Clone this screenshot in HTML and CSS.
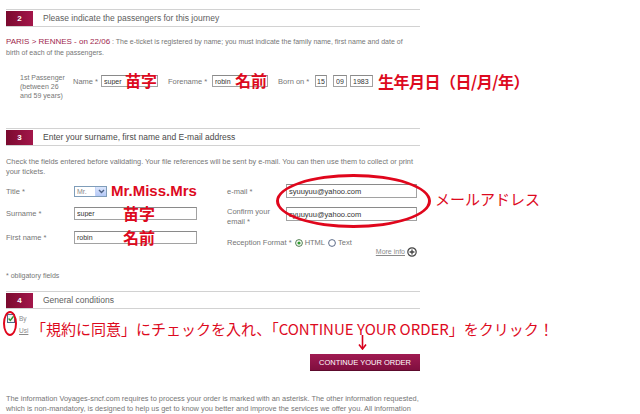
FILE: index.html
```
<!DOCTYPE html>
<html>
<head>
  <meta charset="utf-8">
  <title>Passengers - Voyages-sncf</title>
  <link rel="stylesheet" href="styles.css">
</head>
<body>
  <div class="page">

    <!-- step 2 : passengers -->
    <div class="step-head">
      <span class="step-num">2</span>
      <span class="step-title">Please indicate the passengers for this journey</span>
    </div>
    <p class="intro">
      <span class="route">PARIS &gt; RENNES - on 22/06</span>&nbsp;: The e-ticket is registered by name; you must indicate the family name, first name and date of birth of each of the passengers.
    </p>

    <div class="pax-row">
      <div class="pax-label">1st Passenger<br>(between 26<br>and 59 years)</div>
      <div class="pax-fields">
        <span class="lbl lbl-name">Name *</span>
        <span class="field">
          <input type="text" class="inp inp-name" value="super">
          <span class="note note-in">苗字</span>
        </span>
        <span class="lbl lbl-fore">Forename *</span>
        <span class="field">
          <input type="text" class="inp inp-fore" value="robin">
          <span class="note note-in">名前</span>
        </span>
        <span class="lbl lbl-born">Born on *</span>
        <input type="text" class="inp inp-day" value="15">
        <input type="text" class="inp inp-month" value="09">
        <input type="text" class="inp inp-year" value="1983">
        <span class="note note-birth">生年月日（日/月/年）</span>
      </div>
    </div>

    <!-- step 3 : contact -->
    <div class="step-head step-3">
      <span class="step-num">3</span>
      <span class="step-title dark">Enter your surname, first name and E-mail address</span>
    </div>
    <p class="check-text">Check the fields entered before validating. Your file references will be sent by e-mail. You can then use them to collect or print your tickets.</p>

    <div class="contact">
      <div class="col-left">
        <div class="frow">
          <span class="flabel">Title *</span>
          <div class="select">
            <span class="select-val">Mr.</span>
            <span class="select-btn">
              <svg width="7" height="5" viewBox="0 0 7 5"><path d="M1 1 L3.5 3.5 L6 1" fill="none" stroke="#4d6185" stroke-width="1.4"/></svg>
            </span>
          </div>
          <span class="note note-title">Mr.Miss.Mrs</span>
        </div>
        <div class="frow row-surname">
          <span class="flabel">Surname *</span>
          <span class="field">
            <input type="text" class="inp inp-long" value="super">
            <span class="note note-mid">苗字</span>
          </span>
        </div>
        <div class="frow row-first">
          <span class="flabel">First name *</span>
          <span class="field">
            <input type="text" class="inp inp-long" value="robin">
            <span class="note note-mid">名前</span>
          </span>
        </div>
      </div>

      <div class="col-right">
        <div class="frow">
          <span class="flabel flabel-r">e-mail *</span>
          <input type="text" class="inp inp-mail" value="syuuyuu@yahoo.com">
        </div>
        <div class="frow row-confirm">
          <span class="flabel flabel-r two-line">Confirm your<br>email *</span>
          <input type="text" class="inp inp-mail" value="syuuyuu@yahoo.com">
        </div>
        <div class="reception">
          Reception Format *
          <svg class="radio" width="8" height="8" viewBox="0 0 8 8"><circle cx="4" cy="4" r="3.4" fill="#fff" stroke="#3b6e3b" stroke-width="0.9"/><circle cx="4" cy="4" r="1.6" fill="#2f9a2f"/></svg>
          HTML
          <svg class="radio" width="8" height="8" viewBox="0 0 8 8"><circle cx="4" cy="4" r="3.4" fill="#fff" stroke="#4a5a7a" stroke-width="0.9"/></svg>
          Text
        </div>
        <div class="more-info">
          <a href="#">More info</a>
          <svg width="10" height="10" viewBox="0 0 10 10"><circle cx="5" cy="5" r="4.2" fill="#fff" stroke="#444" stroke-width="1.2"/><path d="M5 2.6 V7.4 M2.6 5 H7.4" stroke="#444" stroke-width="1.3"/></svg>
        </div>
        <div class="ring ring-mail"></div>
        <span class="note note-mail">メールアドレス</span>
      </div>
    </div>

    <p class="oblig">* obligatory fields</p>

    <!-- step 4 : conditions -->
    <div class="step-head">
      <span class="step-num">4</span>
      <span class="step-title">General conditions</span>
    </div>

    <div class="accept">
      <svg class="tick" width="8" height="9" viewBox="0 0 8 9"><rect x="0.5" y="0.5" width="7" height="8" fill="#f4f4f4" stroke="#4b6a8a"/><path d="M1.6 4.6 L3.3 6.4 L6.6 2.2" fill="none" stroke="#2c9a2c" stroke-width="1.4"/></svg>
      <span class="accept-text">By<br><a href="#">Usi</a></span>
      <span class="note note-accept">「規約に同意」にチェックを入れ、「CONTINUE YOUR ORDER」をクリック！</span>
      <div class="ring ring-tick"></div>
    </div>

    <div class="arrow">
      <svg width="9" height="15" viewBox="0 0 9 15"><path d="M4.5 0 V13" stroke="#d8001c" stroke-width="1.6"/><path d="M1 9.5 L4.5 14 L8 9.5" fill="none" stroke="#d8001c" stroke-width="1.6"/></svg>
    </div>

    <div class="actions">
      <button type="button" class="btn-continue">CONTINUE YOUR ORDER</button>
    </div>

    <p class="legal">The information Voyages-sncf.com requires to process your order is marked with an asterisk. The other information requested, which is non-mandatory, is designed to help us get to know you better and improve the services we offer you. All information</p>
  </div>
</body>
</html>
```

FILE: styles.css
```
body {
  margin: 0;
  background-color: #ffffff;
  font-family: "Liberation Sans", Arial, sans-serif;
  color: #767676;
  overflow: hidden;
}

p {
  margin: 0;
}

.page {
  width: 414px;
  height: 414px;
  padding: 9px 0 0 6px;
}

/* step headers */

.step-head {
  display: flex;
  align-items: center;
  height: 16px;
  border-top: 1px solid #d2d2d2;
  border-bottom: 1px solid #d2d2d2;
}

.step-num {
  align-self: stretch;
  flex: none;
  width: 27px;
  margin-top: 1px;
  background: linear-gradient(to right, #7a0a2f, #a3164a);
  color: #ffffff;
  font-size: 8px;
  font-weight: bold;
  line-height: 15px;
  text-align: center;
}

.step-title {
  margin-left: 10px;
  font-size: 8.5px;
  color: #5e5e5e;
}

.step-title.dark {
  color: #4a4a4a;
}

/* step 2 */

.intro {
  width: 406px;
  margin-top: 9px;
  font-size: 7px;
  line-height: 11px;
}

.route {
  color: #9e1f4d;
  font-size: 8px;
  line-height: 1;
}

.pax-row {
  display: flex;
  align-items: flex-start;
  margin-top: 15px;
  font-size: 7px;
}

.pax-label {
  flex: none;
  width: 53px;
  padding-left: 14px;
  line-height: 9px;
}

.pax-fields {
  display: flex;
  flex: none;
  align-items: center;
  height: 12px;
  margin-top: 2px;
  font-size: 7.5px;
}

.pax-fields > * {
  flex: none;
}

.lbl-name {
  width: 28px;
}

.lbl-fore {
  width: 44px;
  margin-left: 10px;
}

.lbl-born {
  width: 37px;
  margin-left: 10px;
}

.field {
  position: relative;
  display: inline-block;
}

.inp {
  box-sizing: border-box;
  height: 12px;
  padding: 0 2px;
  border: 1px solid #a2a2a2;
  border-top-color: #8a8a8a;
  background: #ffffff;
  font-family: "Liberation Sans", Arial, sans-serif;
  font-size: 7px;
  color: #333333;
  outline: none;
}

.inp-name {
  width: 57px;
  display: block;
}

.inp-fore {
  width: 56px;
  display: block;
}

.inp-day {
  width: 12px;
  padding: 0 1px;
}

.inp-month {
  width: 14px;
  margin-left: 6px;
  padding: 0 2px;
}

.inp-year {
  width: 23px;
  margin-left: 3px;
}

/* red hand-written annotations */

.note {
  font-family: "Noto Sans CJK JP", sans-serif;
  color: #dd0a1e;
  font-size: 16px;
  line-height: 18px;
  white-space: nowrap;
}

.note-in {
  position: absolute;
  right: 1px;
  top: -4px;
  font-weight: bold;
}

.note-birth {
  margin-left: 5px;
  font-weight: bold;
  letter-spacing: -0.5px;
}

/* step 3 */

.step-3 {
  margin-top: 28px;
}

.check-text {
  margin-top: 11px;
  font-size: 7.35px;
  line-height: 9.5px;
}

.contact {
  display: flex;
  margin-top: 8px;
  font-size: 7.5px;
}

.col-left {
  flex: none;
  width: 221px;
}

.col-right {
  position: relative;
  flex: 1;
}

.frow {
  display: flex;
  align-items: center;
  height: 14px;
}

.frow > * {
  flex: none;
}

.flabel {
  width: 68px;
}

.flabel-r {
  width: 59px;
}

.row-surname {
  margin-top: 8px;
}

.row-first {
  margin-top: 10px;
}

.select {
  display: flex;
  align-items: center;
  box-sizing: border-box;
  width: 33px;
  height: 11px;
  border: 1px solid #7f9db9;
  background: #ffffff;
}

.select-val {
  flex: 1;
  padding-left: 2px;
  font-size: 7px;
  color: #8a8a8a;
}

.select-btn {
  display: flex;
  align-items: center;
  justify-content: center;
  width: 10px;
  height: 9px;
  background: linear-gradient(#dbe6fd, #b4c8f6);
  border-left: 1px solid #c3d3f8;
}

.note-title {
  margin-left: 4px;
  font-family: "Liberation Sans", Arial, sans-serif;
  font-weight: bold;
  font-size: 15px;
}

.inp-long {
  display: block;
  width: 123px;
  height: 13px;
}

.note-mid {
  position: absolute;
  left: 49px;
  top: -3px;
  font-weight: bold;
}

.inp-mail {
  width: 131px;
  height: 14px;
  font-size: 7.5px;
}

.row-confirm {
  align-items: flex-start;
  height: 20px;
  margin-top: 9px;
}

.two-line {
  line-height: 10px;
}

.reception {
  display: flex;
  align-items: center;
  margin-top: 12px;
  line-height: 8px;
}

.radio {
  flex: none;
  margin: 0 2px 0 3px;
}

.more-info {
  display: flex;
  align-items: center;
  justify-content: flex-end;
  gap: 2px;
  height: 9px;
  padding-right: 3px;
  font-size: 7px;
}

.more-info a {
  color: #8a8a8a;
}

.ring {
  position: absolute;
  border: 3px solid #e0061c;
  border-radius: 50%;
  box-sizing: border-box;
}

.ring-mail {
  left: 49px;
  top: -10px;
  width: 155px;
  height: 54px;
}

.note-mail {
  position: absolute;
  left: 208px;
  top: 6px;
  font-size: 15px;
}

.oblig {
  margin-top: 15px;
  font-size: 7px;
  line-height: 9px;
}

/* step 4 */

.oblig + .step-head {
  margin-top: 11px;
}

.accept {
  position: relative;
  display: flex;
  align-items: flex-start;
  margin-top: 4px;
}

.accept > * {
  flex: none;
}

.tick {
  margin: 1px 0 0 1px;
}

.accept-text {
  width: 12px;
  margin-left: 4px;
  font-size: 6.5px;
  line-height: 12px;
  color: #8a8a8a;
}

.accept-text a {
  color: #8a8a8a;
}

.note-accept {
  margin-top: 7px;
  font-size: 15px;
}

.ring-tick {
  left: -3px;
  top: -2px;
  width: 14px;
  height: 25px;
  border-width: 2.5px;
}

.arrow {
  height: 15px;
  margin-top: -3px;
  padding-left: 352px;
}

.actions {
  display: flex;
  justify-content: flex-end;
  margin-top: 4px;
}

.btn-continue {
  width: 110px;
  height: 17px;
  padding: 0;
  border: none;
  border-bottom: 1px solid #5c0a2c;
  background: linear-gradient(#a01b52, #800f3f);
  color: #ffffff;
  font-family: "Liberation Sans", Arial, sans-serif;
  font-size: 7.5px;
  cursor: pointer;
}

.legal {
  margin-top: 23px;
  font-size: 7.4px;
  line-height: 10px;
}
```
